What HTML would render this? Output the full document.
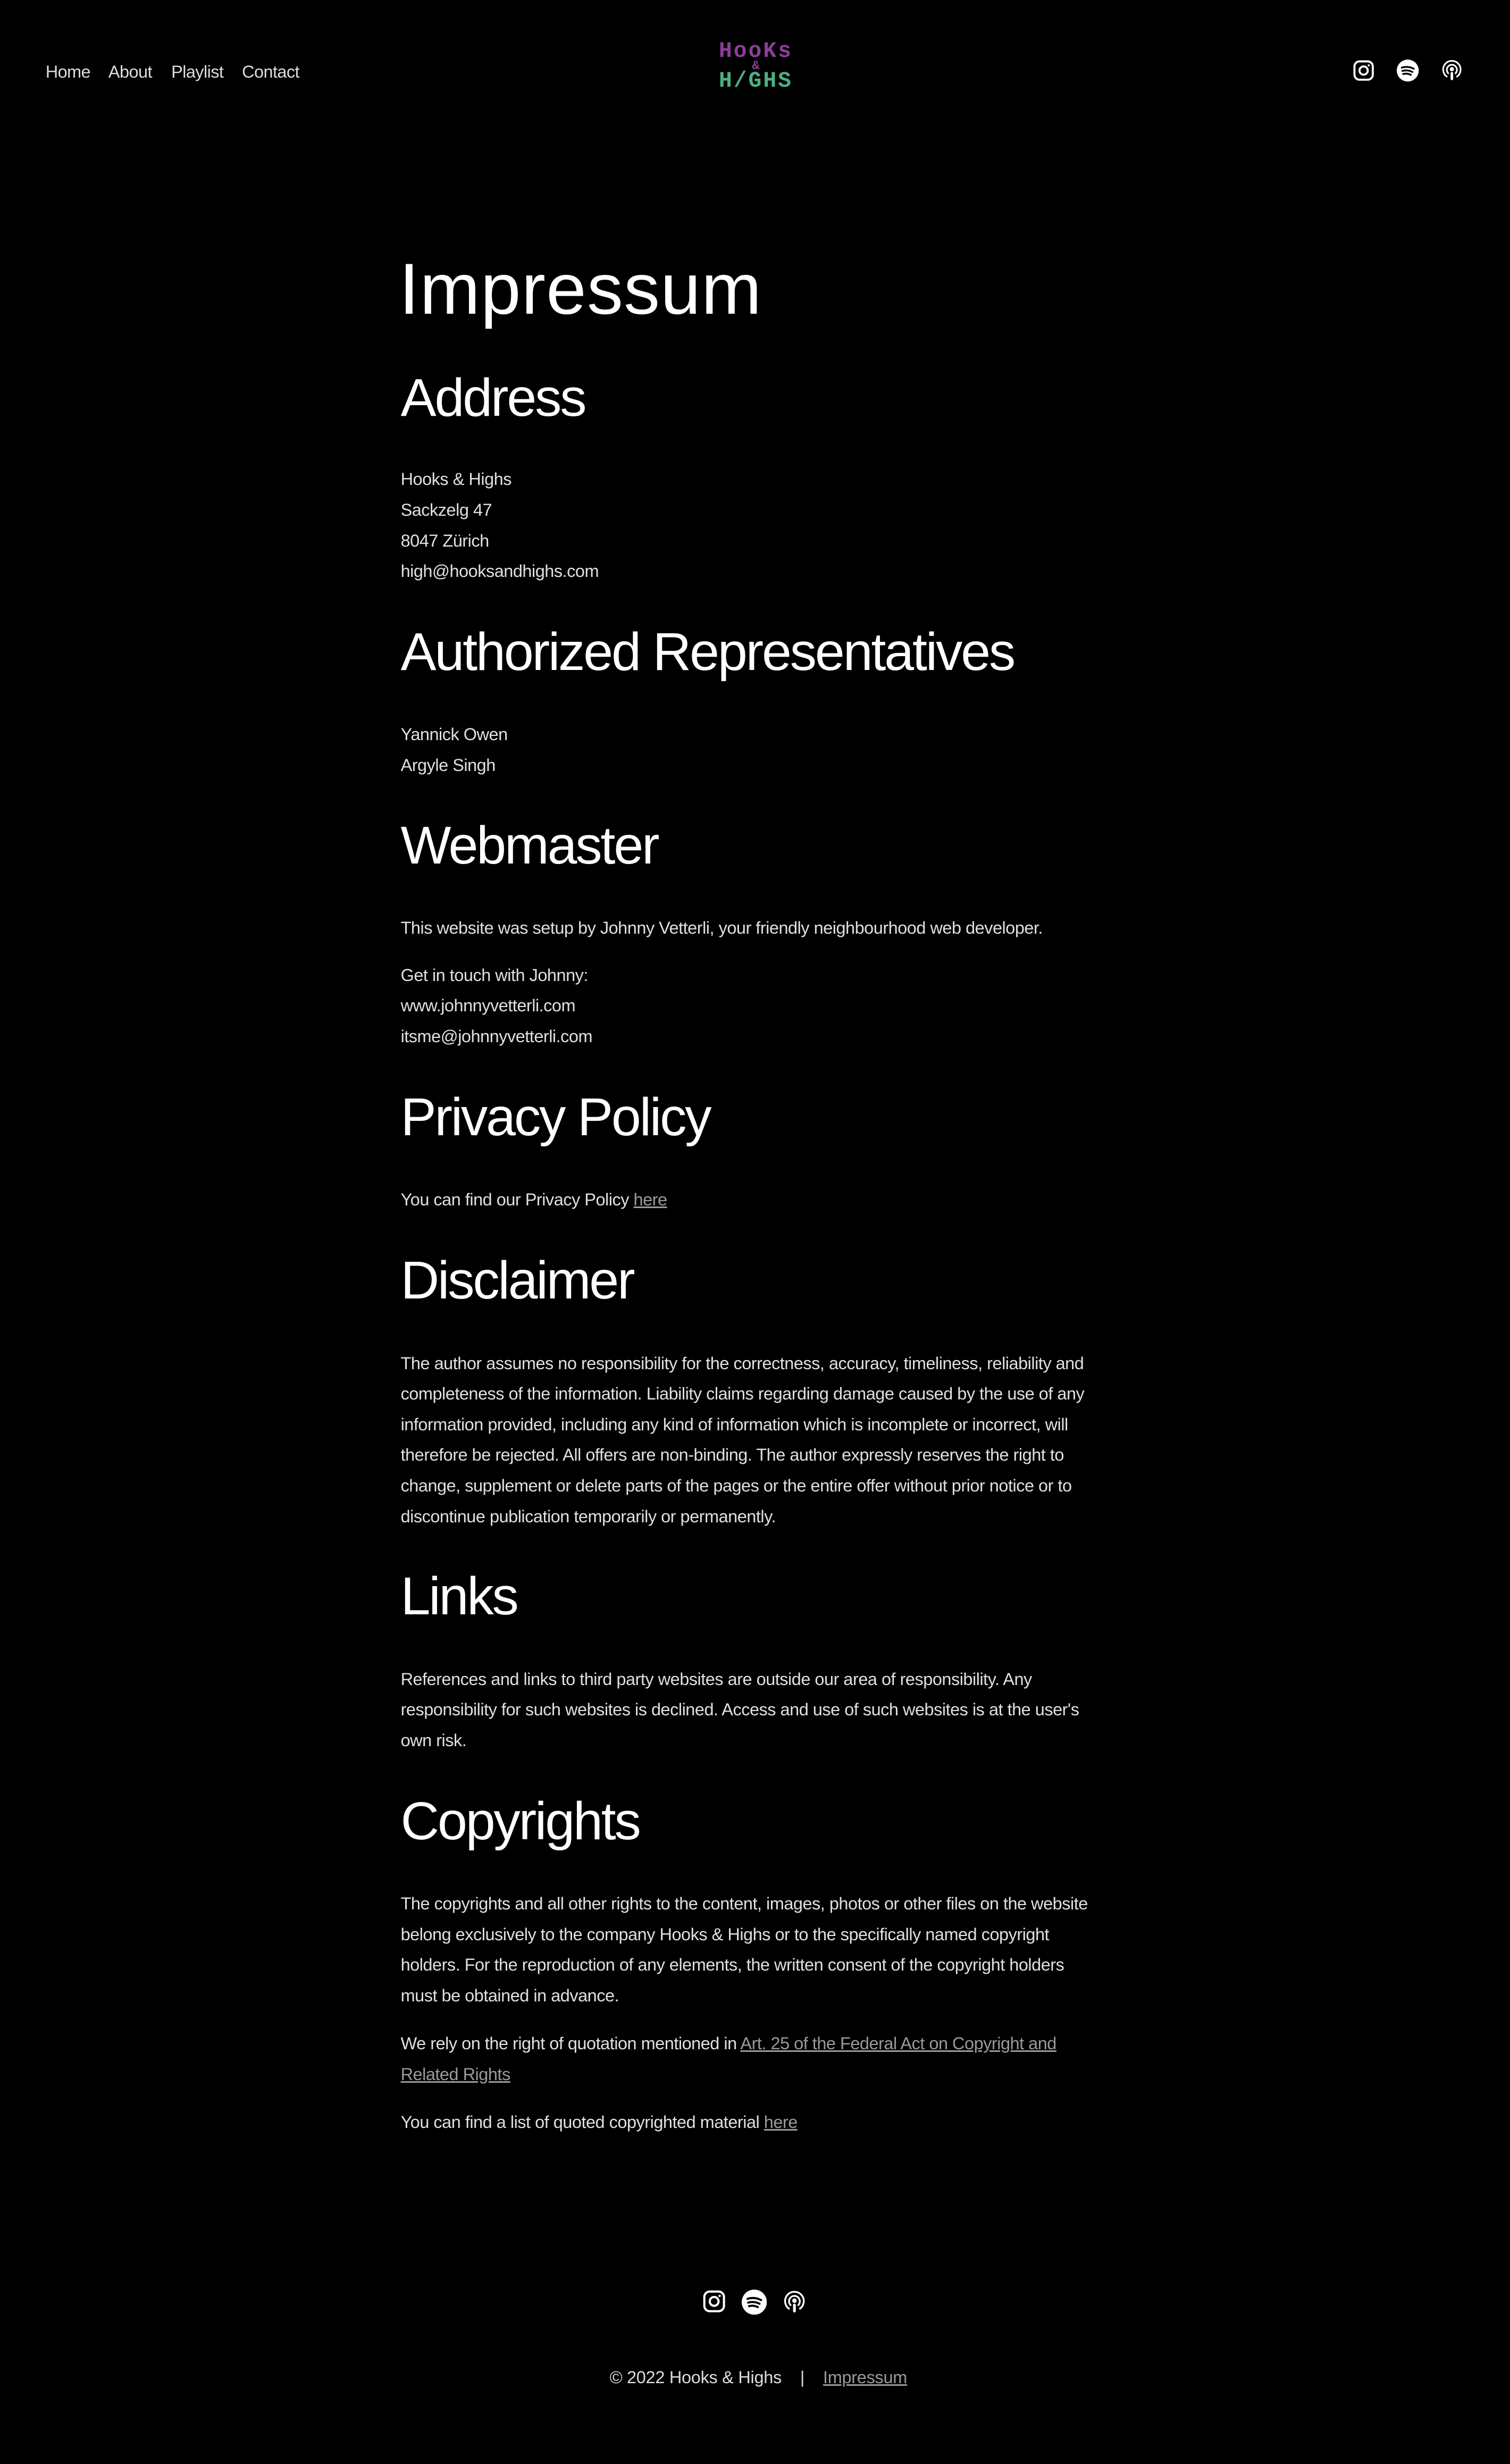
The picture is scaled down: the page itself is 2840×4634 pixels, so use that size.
<!DOCTYPE html>
<html><head><meta charset="utf-8">
<style>
html,body{margin:0;padding:0;background:#000;}
body{width:2840px;height:4634px;overflow:hidden;}
#w{zoom:2.9552;width:961px;height:1568px;position:relative;font-family:"Liberation Sans",sans-serif;color:#e6e6e6;}
.a{position:absolute;white-space:nowrap;}
.nav{top:39px;font-size:11px;letter-spacing:-0.2px;line-height:14px;color:#ddd;}
.h1{left:254px;font-size:46px;line-height:56px;color:#fff;letter-spacing:0.4px;}
.h2{left:255px;font-size:34px;line-height:40px;color:#fff;letter-spacing:-1.05px;}
.p{left:255px;font-size:11px;line-height:19.5px;letter-spacing:-0.17px;color:#e0e0e0;}
a{color:#9a9a9a;text-decoration:underline;}
svg{position:absolute;}
</style></head><body><div id="w">
<div class="a nav" style="left:29px">Home</div>
<div class="a nav" style="left:69px">About</div>
<div class="a nav" style="left:109px">Playlist</div>
<div class="a nav" style="left:154px">Contact</div>

<div class="a" style="left:446px;top:27px;width:70px;text-align:center;font-family:'Liberation Mono',monospace;font-weight:bold;line-height:12px;">
<div style="color:#8a3f97;font-size:14px;letter-spacing:1px">HooKs</div>
<div style="color:#8a3f97;font-size:8px;line-height:7px">&amp;</div>
<div style="color:#4fae83;font-size:14px;letter-spacing:1px">H/GHS</div>
</div>

<!-- header icons -->
<svg style="left:861px;top:38px" width="14" height="14" viewBox="0 0 24 24" fill="none" stroke="#fff" stroke-width="2.2"><rect x="2" y="2" width="20" height="20" rx="5.5"/><circle cx="12" cy="12" r="4.5"/><circle cx="17.6" cy="6.4" r="1.2" fill="#fff" stroke="none"/></svg>
<svg style="left:889px;top:38px" width="14" height="14" viewBox="0 0 24 24"><circle cx="12" cy="12" r="12" fill="#fff"/><path d="M5.5 8.8c4.3-1.3 9-.9 13 1.2M6.2 12.4c3.6-1 7.4-.6 10.8 1.1M7 15.8c2.9-.8 5.8-.4 8.4.9" stroke="#000" stroke-width="2" fill="none" stroke-linecap="round"/></svg>
<svg style="left:917px;top:38px" width="14" height="14" viewBox="0 0 24 24" fill="none" stroke="#fff" stroke-width="1.8"><path d="M7 19A9.5 9.5 0 1 1 17 19"/><path d="M8.6 15.5A5.5 5.5 0 1 1 15.4 15.5"/><circle cx="12" cy="10.5" r="2.3" fill="#fff" stroke="none"/><rect x="10.6" y="13.5" width="2.8" height="9" rx="1.4" fill="#fff" stroke="none"/></svg>

<div class="a h1" style="top:156px">Impressum</div>

<div class="a h2" style="top:233px">Address</div>
<div class="a p" style="top:295.5px">Hooks &amp; Highs<br>Sackzelg 47<br>8047 Zürich<br>high@hooksandhighs.com</div>

<div class="a h2" style="top:395px">Authorized Representatives</div>
<div class="a p" style="top:458px">Yannick Owen<br>Argyle Singh</div>

<div class="a h2" style="top:518px">Webmaster</div>
<div class="a p" style="top:581px">This website was setup by Johnny Vetterli, your friendly neighbourhood web developer.</div>
<div class="a p" style="top:611px">Get in touch with Johnny:<br>www.johnnyvetterli.com<br>itsme@johnnyvetterli.com</div>

<div class="a h2" style="top:691px">Privacy Policy</div>
<div class="a p" style="top:754px">You can find our Privacy Policy <a>here</a></div>

<div class="a h2" style="top:795px">Disclaimer</div>
<div class="a p" style="top:858px">The author assumes no responsibility for the correctness, accuracy, timeliness, reliability and<br>completeness of the information. Liability claims regarding damage caused by the use of any<br>information provided, including any kind of information which is incomplete or incorrect, will<br>therefore be rejected. All offers are non-binding. The author expressly reserves the right to<br>change, supplement or delete parts of the pages or the entire offer without prior notice or to<br>discontinue publication temporarily or permanently.</div>

<div class="a h2" style="top:996px">Links</div>
<div class="a p" style="top:1059px">References and links to third party websites are outside our area of responsibility. Any<br>responsibility for such websites is declined. Access and use of such websites is at the user's<br>own risk.</div>

<div class="a h2" style="top:1139px">Copyrights</div>
<div class="a p" style="top:1202px">The copyrights and all other rights to the content, images, photos or other files on the website<br>belong exclusively to the company Hooks &amp; Highs or to the specifically named copyright<br>holders. For the reproduction of any elements, the written consent of the copyright holders<br>must be obtained in advance.</div>
<div class="a p" style="top:1291px">We rely on the right of quotation mentioned in <a>Art. 25 of the Federal Act on Copyright and<br>Related Rights</a></div>
<div class="a p" style="top:1341px">You can find a list of quoted copyrighted material <a>here</a></div>

<!-- footer icons -->
<svg style="left:447px;top:1457px" width="15" height="15" viewBox="0 0 24 24" fill="none" stroke="#fff" stroke-width="2.2"><rect x="2" y="2" width="20" height="20" rx="5.5"/><circle cx="12" cy="12" r="4.5"/><circle cx="17.6" cy="6.4" r="1.2" fill="#fff" stroke="none"/></svg>
<svg style="left:472px;top:1457px" width="16" height="16" viewBox="0 0 24 24"><circle cx="12" cy="12" r="12" fill="#fff"/><path d="M5.5 8.8c4.3-1.3 9-.9 13 1.2M6.2 12.4c3.6-1 7.4-.6 10.8 1.1M7 15.8c2.9-.8 5.8-.4 8.4.9" stroke="#000" stroke-width="2" fill="none" stroke-linecap="round"/></svg>
<svg style="left:498px;top:1457px" width="15" height="16" viewBox="0 0 24 24" fill="none" stroke="#fff" stroke-width="1.8"><path d="M7 19A9.5 9.5 0 1 1 17 19"/><path d="M8.6 15.5A5.5 5.5 0 1 1 15.4 15.5"/><circle cx="12" cy="10.5" r="2.3" fill="#fff" stroke="none"/><rect x="10.6" y="13.5" width="2.8" height="9" rx="1.4" fill="#fff" stroke="none"/></svg>

<div class="a" style="left:388px;top:1506px;font-size:11px;line-height:14px;letter-spacing:-0.1px;color:#ddd">© 2022 Hooks &amp; Highs &nbsp;&nbsp; | &nbsp;&nbsp; <a>Impressum</a></div>
</div></body></html>
